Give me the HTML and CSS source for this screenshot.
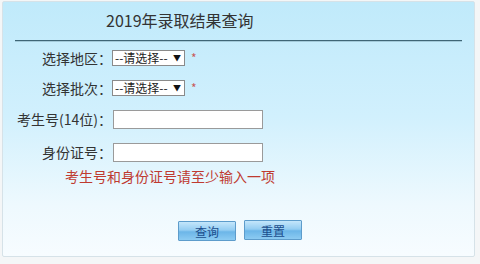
FILE: index.html
```html
<!DOCTYPE html>
<html lang="zh-CN">
<head>
    <meta charset="UTF-8">
    <title>2019年录取结果查询</title>
    <link rel="stylesheet" href="styles.css">
</head>
<body>
    <div class="panel">
        <div class="title">2019年录取结果查询</div>
        <div class="form">
            <div class="row">
                <label class="label">选择地区：</label>
                <span class="select-box">
                    <select><option>--请选择--</option></select>
                    <span class="arrow">▼</span>
                </span>
                <span class="star">*</span>
            </div>
            <div class="row">
                <label class="label">选择批次：</label>
                <span class="select-box">
                    <select><option>--请选择--</option></select>
                    <span class="arrow">▼</span>
                </span>
                <span class="star">*</span>
            </div>
            <div class="row row-input">
                <label class="label">考生号(14位)：</label>
                <input type="text">
            </div>
            <div class="row row-input">
                <label class="label">身份证号：</label>
                <input type="text">
            </div>
            <div class="hint">考生号和身份证号请至少输入一项</div>
            <div class="buttons">
                <button>查询</button>
                <button class="reset">重置</button>
            </div>
        </div>
    </div>
</body>
</html>
```

FILE: styles.css
```css
body {
    margin: 0;
    background: #f4f6f7;
    font-family: "Noto Sans CJK SC", "Microsoft YaHei", sans-serif;
}
.panel {
    width: 473px;
    height: 256px;
    margin: 1px 0 0 2px;
    border: 1px solid #d6e2e8;
    border-radius: 2px;
    background: linear-gradient(180deg, #c0eafb 0%, #d1f0fd 45%, #eef9fe 80%, #f7fcff 100%);
    box-sizing: border-box;
}
.title {
    height: 38px;
    margin: 0 12px;
    padding-left: 91px;
    border-bottom: 1px solid #3f6676;
    box-shadow: 0 1px 0 rgba(60, 100, 115, 0.25);
    font-size: 16px;
    line-height: 36px;
    color: #333;
}
.form {
    padding-top: 2px;
}
.row {
    display: flex;
    align-items: center;
    height: 29px;
}
.row + .row {
    margin-top: 1px;
}
.row-input {
    height: 32px;
}
.label {
    width: 109px;
    text-align: right;
    font-size: 14px;
    color: #333;
    white-space: nowrap;
}
.select-box {
    display: flex;
    align-items: center;
    width: 73px;
    height: 16px;
    border: 1px solid #8a8a8a;
    background: #fff;
    box-sizing: border-box;
}
.select-box select {
    appearance: none;
    -webkit-appearance: none;
    border: none;
    background: transparent;
    padding: 0 0 0 2px;
    width: 60px;
    font-family: inherit;
    font-size: 12px;
    line-height: 14px;
    height: 14px;
    color: #222;
}
.arrow {
    font-size: 8px;
    color: #111;
    line-height: 14px;
}
.star {
    margin-left: 6px;
    font-size: 12px;
    color: #c85a5a;
}
input[type="text"] {
    width: 150px;
    height: 19px;
    margin-left: 1px;
    border: 1px solid #9a9a9a;
    background: #fff;
    box-sizing: border-box;
}
.hint {
    padding-left: 62px;
    margin-top: -2px;
    font-size: 14px;
    color: #bf3a30;
}
.buttons {
    display: flex;
    gap: 8px;
    padding-left: 175px;
    margin-top: 35px;
}
button {
    width: 58px;
    height: 20px;
    padding: 0;
    border: 1px solid #5d9ccb;
    border-radius: 1px;
    background: linear-gradient(180deg, #c4e6fb 0%, #94cdf2 45%, #6cb6e8 55%, #8ccbf2 100%);
    font-family: inherit;
    font-size: 12px;
    color: #1b4d8c;
    cursor: pointer;
}
.reset {
    margin-top: -1px;
}
```
